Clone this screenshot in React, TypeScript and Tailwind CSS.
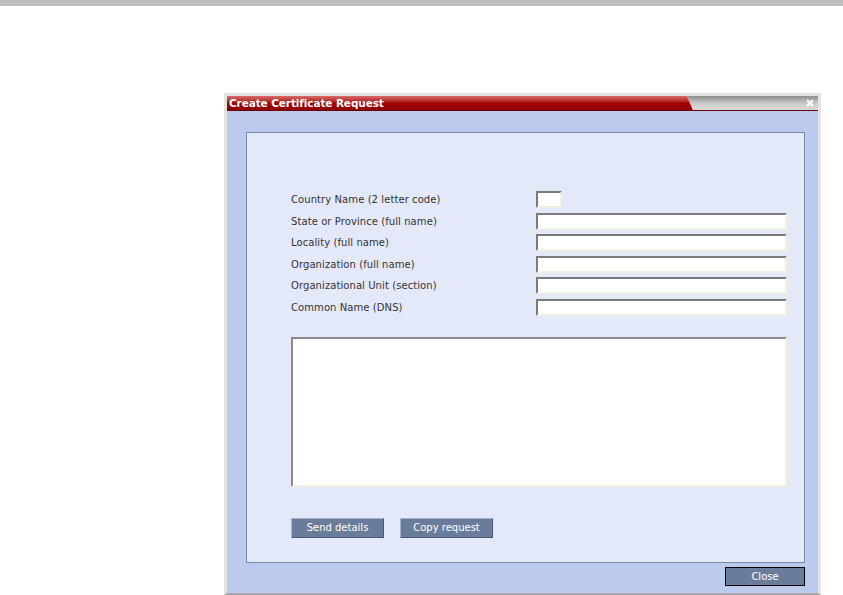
import React from "react"

const rows = [
  { label: "Country Name (2 letter code)", short: true },
  { label: "State or Province (full name)" },
  { label: "Locality (full name)" },
  { label: "Organization (full name)" },
  { label: "Organizational Unit (section)" },
  { label: "Common Name (DNS)" },
]

const inputCls =
  "h-[17px] bg-white border-2 border-t-[#7b7b7b] border-l-[#7b7b7b] border-b-[#f1efe2] border-r-[#f1efe2]"

export default function App() {
  return (
    <div className="w-[843px] h-[595px] bg-white overflow-hidden font-['DejaVu_Sans',Verdana,sans-serif]">
      <div className="h-[6px] bg-[#bebebe]" />

      <div className="ml-[224px] mt-[87px] w-[597px] h-[502px] border-[3px] border-[#e4e4de] border-b-[#a8a8a8] border-b-2 flex flex-col">
        {/* title bar */}
        <div className="h-[15px] flex border-b border-[#6b0000] shrink-0">
          <div className="w-[456px] bg-gradient-to-b from-[#d86a6a] via-[#a30000] to-[#8e0000] flex items-center pl-[2px]">
            <span className="text-white font-bold text-[10.5px] tracking-[-0.1px] leading-none">
              Create Certificate Request
            </span>
          </div>
          <div
            className="w-[10px] bg-gradient-to-b from-[#d86a6a] via-[#a30000] to-[#8e0000]"
            style={{ clipPath: "polygon(0 0, 40% 0, 100% 100%, 0 100%)" }}
          />
          <div className="flex-1 -ml-[10px] bg-gradient-to-b from-[#8c8c8c] via-[#c8c8c8] to-[#dcdcdc] flex items-center justify-end pr-[4px]"
            style={{ clipPath: "polygon(4px 0, 100% 0, 100% 100%, 10px 100%)" }}>
            <svg width="8" height="8" viewBox="0 0 8 8">
              <path d="M1 1 L7 7 M7 1 L1 7" stroke="white" strokeWidth="2" />
            </svg>
          </div>
        </div>

        {/* body */}
        <div className="flex-1 bg-[#bccbed] flex flex-col pl-[19px] pr-[13px] pt-[21px]">
          <div className="h-[431px] bg-[#e4e9f9] border border-[#7a88a8] flex flex-col pl-[44px] pr-[15px] pt-[58px]">
            <div className="flex flex-col">
              {rows.map((r) => (
                <div key={r.label} className="h-[21.6px] flex items-start">
                  <div className="w-[245px] text-[10px] text-[#333] tracking-[0.08px] leading-[17px]">{r.label}</div>
                  <div className={inputCls + (r.short ? " w-[26px]" : " w-[251px]")} />
                </div>
              ))}
            </div>

            <div className="mt-[16px] w-[496px] h-[150px] bg-white border-2 border-t-[#8a8a8a] border-l-[#8a8a8a] border-b-[#f1efe2] border-r-[#f1efe2]" />

            <div className="mt-[31px] flex gap-[16px]">
              <button className="w-[93px] h-[20px] bg-[#6b7c9b] border border-t-[#a7b3c9] border-l-[#a7b3c9] border-b-[#47577a] border-r-[#47577a] text-white text-[10px] leading-none">
                Send details
              </button>
              <button className="w-[93px] h-[20px] bg-[#6b7c9b] border border-t-[#a7b3c9] border-l-[#a7b3c9] border-b-[#47577a] border-r-[#47577a] text-white text-[10px] leading-none">
                Copy request
              </button>
            </div>
          </div>

          <div className="flex justify-end mt-[4px] pr-0">
            <button className="w-[80px] h-[19px] bg-[#6b7c9b] border border-black text-white text-[10px] leading-none">
              Close
            </button>
          </div>
        </div>
      </div>
    </div>
  )
}
